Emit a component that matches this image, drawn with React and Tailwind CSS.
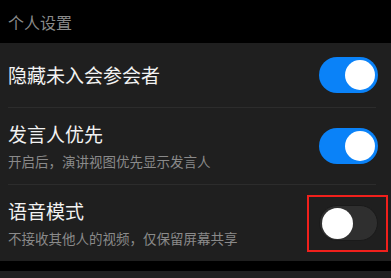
import React from "react";

const FONT = { fontFamily: '"Noto Sans CJK SC", "Noto Sans", sans-serif' };

function Toggle({ on }) {
  if (on) {
    return (
      <div className="w-[59px] h-[36px] rounded-full bg-[#0a82f8] flex items-center justify-end pr-[3px] shrink-0">
        <div className="w-[30px] h-[30px] rounded-full bg-white" />
      </div>
    );
  }
  return (
    <div className="w-[59px] h-[36px] rounded-full bg-[#2f2f2f] border border-[#1a1a1a] flex items-center pl-[2px] shrink-0">
      <div className="w-[31px] h-[31px] rounded-full bg-white" />
    </div>
  );
}

export default function App() {
  return (
    <div className="w-[391px] h-[278px] bg-black overflow-hidden" style={FONT}>
      {/* section header */}
      <div className="h-[43px] flex items-center px-2 text-[16px] text-[#8a8a8a]">个人设置</div>

      <div className="bg-[#1f1f1f]">
        <div className="h-[64px] flex items-center justify-between pl-2 pr-[13px]">
          <span className="text-[19px] text-[#f2f2f2] leading-[26px]">隐藏未入会参会者</span>
          <Toggle on />
        </div>
        <div className="h-px bg-[#2c2c2c] ml-2 mr-[15px]" />

        <div className="h-[76px] flex items-center justify-between pl-2 pr-[13px]">
          <div className="flex flex-col">
            <span className="text-[19px] text-[#f2f2f2] leading-[26px]">发言人优先</span>
            <span className="mt-1 text-[13.5px] text-[#8a8a8a] leading-[20px]">开启后，演讲视图优先显示发言人</span>
          </div>
          <Toggle on />
        </div>
        <div className="h-px bg-[#2c2c2c] ml-2 mr-[15px]" />

        <div className="relative h-[76px] flex items-center justify-between pl-2 pr-[13px]">
          <div className="flex flex-col">
            <span className="text-[19px] text-[#f2f2f2] leading-[26px]">语音模式</span>
            <span className="mt-1 text-[13.5px] text-[#8a8a8a] leading-[20px]">不接收其他人的视频，仅保留屏幕共享</span>
          </div>
          <Toggle />
          {/* highlight box */}
          <div className="absolute left-[307px] top-[10px] w-[81px] h-[57px] border-2 border-[#f0201c]" />
        </div>
      </div>

      <div className="h-[10px]" />
      <div className="h-[10px] bg-[#1f1f1f]" />
    </div>
  );
}
